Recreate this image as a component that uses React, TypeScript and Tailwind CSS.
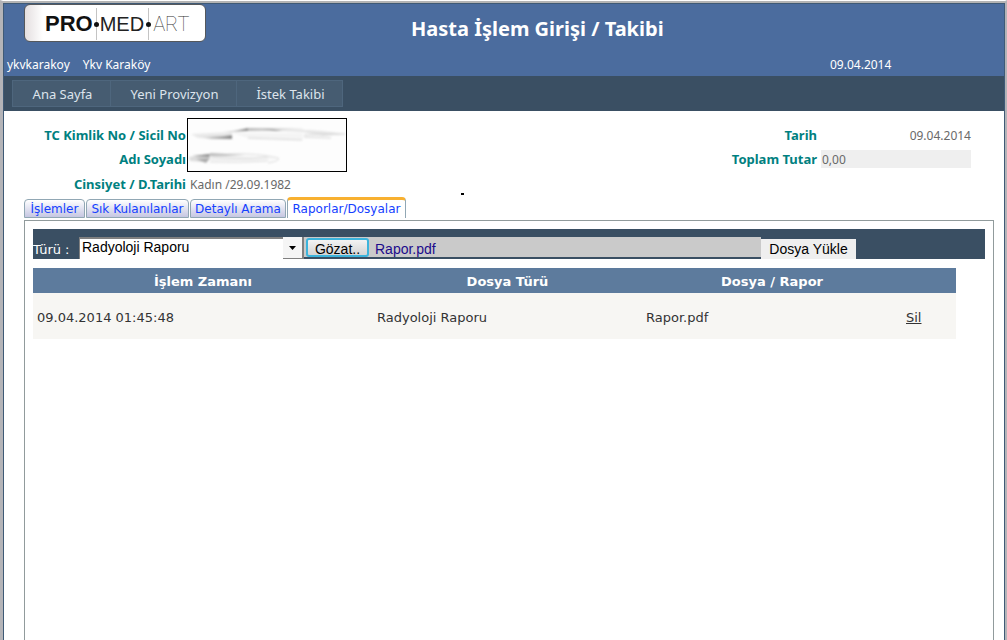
import React from "react";

const menu = [
  { label: "Ana Sayfa", width: "w-[99px]" },
  { label: "Yeni Provizyon", width: "w-[126px]" },
  { label: "İstek Takibi", width: "w-[106px]" },
];

const tabs = [
  { label: "İşlemler", width: "w-[61px]" },
  { label: "Sık Kulanılanlar", width: "w-[103px]" },
  { label: "Detaylı Arama", width: "w-[96px]" },
  { label: "Raporlar/Dosyalar", width: "w-[119px]" },
];

function LogoDot() {
  return (
    <span className="mx-px flex w-[5px] flex-col items-center self-stretch">
      <span className="w-px grow bg-[#c4c4c4]" />
      <span className="size-[5px] rounded-full bg-[#111]" />
      <span className="w-px grow bg-[#c4c4c4]" />
    </span>
  );
}

function Logo() {
  return (
    <div className="flex h-[38px] w-[182px] items-center rounded-md border border-[#55585c] bg-gradient-to-r from-[#e4dfe0] via-white via-10% to-white pt-[2px] pl-5 font-['Liberation_Sans',sans-serif] text-[20px] leading-[32px] text-[#222]">
      <div className="flex h-8 items-baseline">
        <span className="text-[22px] font-bold text-[#111]">PRO</span>
        <LogoDot />
        <span>MED</span>
        <span className="w-px" />
        <LogoDot />
        <span className="pl-px font-['Roboto',sans-serif] font-thin text-[#333]">ART</span>
      </div>
    </div>
  );
}

function Scribble() {
  return (
    <svg className="block h-[54px] w-[160px] border border-black bg-[#fdfdfd]" viewBox="0 0 158 52" aria-hidden="true">
      <defs>
        <linearGradient id="ink" x1="0" x2="1">
          <stop offset="0" stopColor="#f0f0f0" />
          <stop offset="1" stopColor="#888" />
        </linearGradient>
        <linearGradient id="fade" x1="0" x2="1">
          <stop offset="0" stopColor="#bbb" />
          <stop offset="1" stopColor="#f4f4f4" />
        </linearGradient>
        <filter id="smudge">
          <feGaussianBlur stdDeviation="0.8" />
        </filter>
      </defs>
      <g filter="url(#smudge)">
        <path d="M3 15 L44 13 L44 17 L10 19 Z" fill="#e9e9e9" />
        <path d="M8 18 Q28 18 44 16 L44 20 L24 20 Z" fill="url(#ink)" />
        <path d="M34 13 Q48 12 60 9 L60 12 L44 13 Z" fill="url(#ink)" />
        <path d="M60 9 L115 9 L115 12 L92 12 L60 12 Z" fill="url(#fade)" />
        <path d="M74 10 Q86 10 94 12 L88 12 Z" fill="#888" />
        <path d="M44 14 L115 14 L115 21 L60 19 Z" fill="#f4f4f4" />
        <path d="M94 12 Q120 9 157 15 L135 17 L115 13 Z" fill="#e4e4e4" />
        <path d="M116 16 L157 15 M60 19 L114 21 M116 18 L143 19" stroke="#d4d4d4" fill="none" />
        <path d="M1 38 L22 35 L22 39 L18 43 L2 42 Z" fill="#ddd" />
        <path d="M4 37 L22 35 L21 38 Z" fill="#888" />
        <path d="M8 40 L22 39 L18 44 Z" fill="#aaa" />
        <path d="M22 34 L58 36 L22 38 Z" fill="#bbb" />
        <path d="M22 37 L78 38 L88 40 L60 42 L22 42 Z" fill="#f2f2f2" />
        <path d="M40 35 Q70 34 90 39 Q94 41 80 44 M24 38 Q50 41 80 38 M22 43 Q50 44 80 42" stroke="#dadada" fill="none" />
      </g>
    </svg>
  );
}

export default function App() {
  return (
    <div className="min-h-screen border-x-2 border-t border-l-3 border-t-white border-x-[#b4b4b8] bg-white font-['Noto_Sans',sans-serif] text-[13px] leading-[18px]">
      <div className="border-t-2 border-[#b4b4b4]">
        <div className="flex min-h-[637px] flex-col border border-b-0 border-[#3f5a76]">
          <header className="grid h-[72px] grid-cols-[407px_1fr_174px] bg-[#4b6c9e] text-[12px] text-white">
            <div className="flex flex-col justify-between pb-[2px]">
              <div className="pl-5">
                <Logo />
              </div>
              <div className="flex gap-[13px] pl-[3px]">
                <span>ykvkarakoy</span>
                <span>Ykv Karaköy</span>
              </div>
            </div>
            <h1 className="pt-[11px] text-[20px] leading-7 font-bold">Hasta İşlem Girişi / Takibi</h1>
            <div className="self-end pb-[2px]">09.04.2014</div>
          </header>

          <nav className="flex h-[35px] bg-[#3a4f63] px-2 py-1">
            {menu.map((m, i) => (
              <a
                key={m.label}
                href="#"
                className={`flex h-[27px] items-center justify-center border border-[#4e667d] bg-[#465c71] pl-[2px] text-[#dde4ec] ${m.width} ${i > 0 ? "border-l-0" : ""}`}
              >
                {m.label}
              </a>
            ))}
          </nav>

          <section className="flex justify-between pt-[7px] pr-[33px]">
            <div className="grid grid-cols-[183px_auto] grid-rows-[24px_25px_24px]">
              <div className="pt-2 pr-px text-right font-bold whitespace-nowrap text-[#008080]">TC Kimlik No / Sicil No</div>
              <div className="row-span-2">
                <Scribble />
              </div>
              <div className="pt-2 pr-px text-right font-bold text-[#008080]">Adı Soyadı</div>
              <div className="pt-2 pr-px text-right font-bold text-[#008080]">Cinsiyet / D.Tarihi</div>
              <div className="flex pt-[9px] pl-[3px] text-[12px] text-[#696969]">
                <span className="w-[271px]">Kadın /29.09.1982</span>
                <span className="mt-[17px] h-[2px] w-[3px] bg-black" />
              </div>
            </div>
            <div className="grid grid-cols-[auto_150px] grid-rows-[24px_24px] gap-x-1">
              <div className="pt-2 text-right font-bold text-[#008080]">Tarih</div>
              <div className="pt-[9px] text-right text-[12px] text-[#696969]">09.04.2014</div>
              <label htmlFor="total" className="pt-2 text-right font-bold text-[#008080]">
                Toplam Tutar
              </label>
              <input
                id="total"
                readOnly
                defaultValue="0,00"
                className="mt-2 h-[18px] w-full bg-[#efefef] px-px pt-px text-[12px] text-[#696969] outline-none"
              />
            </div>
          </section>

          <div role="tablist" className="mt-[6px] flex items-end gap-px pl-5 font-['DejaVu_Sans',sans-serif] text-[12px] text-[#1440ff]">
            {tabs.map((t, i) => (
              <button
                key={t.label}
                role="tab"
                aria-selected={i === 3}
                className={`rounded-t border whitespace-nowrap ${t.width} ${
                  i === 3
                    ? "h-[21px] border-t-3 border-b-0 border-[#91a7b4] border-t-[#f8b030] bg-white"
                    : "h-[19px] border-[#91a7b4] bg-gradient-to-b from-white to-[#c6c7e2]"
                }`}
              >
                {t.label}
              </button>
            ))}
          </div>

          <main className="mt-[2px] mr-[10px] ml-5 grow border border-b-0 border-[#919b9c] px-2 pt-2 font-['DejaVu_Sans',sans-serif] text-[#333]">
            <form className="flex h-[30px] items-end bg-[#3a4f63]" onSubmit={(e) => e.preventDefault()}>
              <label htmlFor="kind" className="w-[46px] text-white">
                Türü :
              </label>
              <div className="relative h-[22px] w-[225px] font-['Liberation_Sans',sans-serif] text-[14px] text-black">
                <select
                  id="kind"
                  className="h-full w-full appearance-none border-t-2 border-l border-[#808080] bg-white pb-1 pl-[2px] leading-4"
                >
                  <option>Radyoloji Raporu</option>
                </select>
                <span className="pointer-events-none absolute top-0 right-0 flex h-[22px] w-[21px] items-center justify-center border-r-2 border-b border-[#808080] bg-[#f5f5f5]">
                  <svg viewBox="0 0 7 4" className="h-1 w-[7px]">
                    <path d="M0 0h7L3.5 4z" />
                  </svg>
                </span>
              </div>
              <div className="mb-[2px] flex h-5 w-[457px] items-center bg-[#cacaca] pl-[2px] font-['Liberation_Sans',sans-serif] text-[14px] text-[#1c0a8c]">
                <button className="h-[19px] w-[63px] rounded-[3px] border-2 border-[#3cb4dc] bg-gradient-to-b from-[#f3f3f3] to-[#d4d4d4] pt-px leading-4 text-black">
                  Gözat..
                </button>
                <span className="pt-1 pl-[6px]">Rapor.pdf</span>
              </div>
              <button className="h-5 w-[95px] bg-[#efefef] font-['Liberation_Sans',sans-serif] text-[14px] text-black">
                Dosya Yükle
              </button>
            </form>

            <table className="mt-[9px] w-[calc(100%-29px)] table-fixed border-collapse">
              <colgroup>
                <col className="w-[340px]" />
                <col className="w-[269px]" />
                <col className="w-[260px]" />
                <col />
              </colgroup>
              <thead className="bg-[#5d7b9d] text-white">
                <tr className="h-[25px]">
                  <th className="pt-[2px] font-bold">İşlem Zamanı</th>
                  <th className="pt-[2px] font-bold">Dosya Türü</th>
                  <th className="pt-[2px] font-bold">Dosya / Rapor</th>
                  <th />
                </tr>
              </thead>
              <tbody>
                <tr className="h-[46px] bg-[#f7f6f3]">
                  <td className="px-1 pt-1">09.04.2014 01:45:48</td>
                  <td className="px-1 pt-1">Radyoloji Raporu</td>
                  <td className="px-1 pt-1">Rapor.pdf</td>
                  <td className="px-1 pt-1">
                    <a href="#" className="underline">
                      Sil
                    </a>
                  </td>
                </tr>
              </tbody>
            </table>
          </main>
        </div>
      </div>
    </div>
  );
}
